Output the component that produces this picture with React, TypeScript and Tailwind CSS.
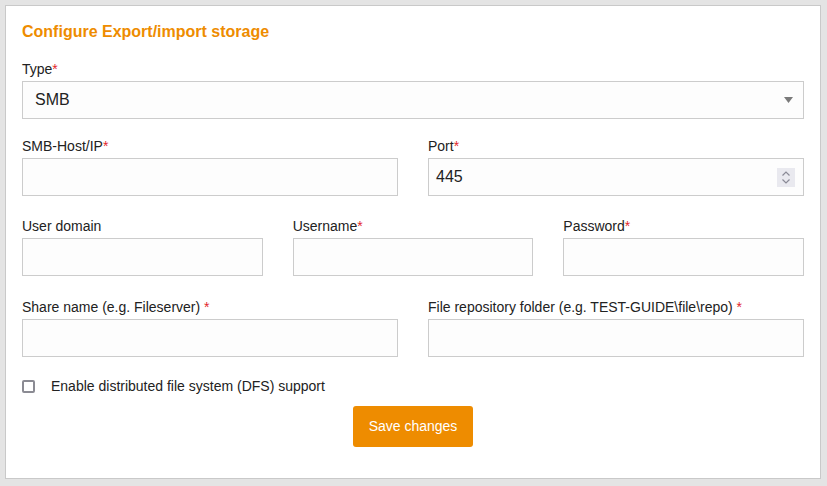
import { ReactNode } from "react";

function Label({ children, required, spaced }: { children: ReactNode; required?: boolean; spaced?: boolean }) {
  return (
    <div className="mb-[2px] text-[14px] leading-[20px] text-[#222]">
      {children}
      {required && <span className="text-[#e3262c]">{spaced ? " *" : "*"}</span>}
    </div>
  );
}

function TextBox({ value }: { value?: string }) {
  return (
    <div className="flex h-[38px] items-center border border-[#cccccc] bg-[#fdfdfd] px-[7px] text-[16px] text-[#222]">
      {value}
    </div>
  );
}

export default function App() {
  return (
    <div className="h-[486px] w-[827px] bg-[#e4e4e4] pl-[5px] pt-[5px] font-['Liberation_Sans',Arial,sans-serif]">
      <div className="h-[474px] w-[816px] border border-[#c9c9c9] bg-white px-4 pt-[14px]">
        <h2 className="text-[16px] font-bold leading-[24px] text-[#ee8c00]">
          Configure Export/import storage
        </h2>

        <div className="mt-[15px]">
          <Label required>Type</Label>
          <div className="flex h-[38px] items-center justify-between border border-[#cccccc] bg-[#fdfdfd] pl-[12px] pr-[10px] text-[16px] text-[#222]">
            <span>SMB</span>
            <svg width="9" height="6" viewBox="0 0 9 6">
              <path d="M0 0h9L4.5 6z" fill="#7a7a7a" />
            </svg>
          </div>
        </div>

        <div className="mt-[17px] grid grid-cols-2 gap-x-[30px]">
          <div>
            <Label required>SMB-Host/IP</Label>
            <TextBox />
          </div>
          <div>
            <Label required>Port</Label>
            <div className="flex h-[38px] items-center justify-between border border-[#cccccc] bg-[#fdfdfd] pl-[7px] pr-[8px] text-[16px] text-[#222]">
              <span>445</span>
              <div className="flex h-[19px] w-[18px] items-center justify-center bg-[#e9e9ef]">
                <svg width="10" height="15" viewBox="0 0 10 15" fill="none" stroke="#8a8a96" strokeWidth="1.2">
                  <path d="M1.5 5.5 5 2l3.5 3.5" />
                  <path d="M1.5 9.5 5 13l3.5-3.5" />
                </svg>
              </div>
            </div>
          </div>
        </div>

        <div className="mt-[20px] grid grid-cols-3 gap-x-[30px]">
          <div>
            <Label>User domain</Label>
            <TextBox />
          </div>
          <div>
            <Label required>Username</Label>
            <TextBox />
          </div>
          <div>
            <Label required>Password</Label>
            <TextBox />
          </div>
        </div>

        <div className="mt-[21px] grid grid-cols-2 gap-x-[30px]">
          <div>
            <Label required spaced>Share name (e.g. Fileserver)</Label>
            <TextBox />
          </div>
          <div>
            <Label required spaced>File repository folder (e.g. TEST-GUIDE\file\repo)</Label>
            <TextBox />
          </div>
        </div>

        <div className="mt-[21px] flex items-center">
          <span className="h-[13px] w-[13px] rounded-[2px] border-2 border-[#8b8b93] bg-white" />
          <span className="ml-[16px] text-[14px] leading-[16px] text-[#222]">
            Enable distributed file system (DFS) support
          </span>
        </div>

        <div className="mt-[12px] flex justify-center">
          <button className="h-[41px] w-[120px] rounded-[3px] bg-[#ee8c00] text-[14px] text-white">
            Save changes
          </button>
        </div>
      </div>
    </div>
  );
}
